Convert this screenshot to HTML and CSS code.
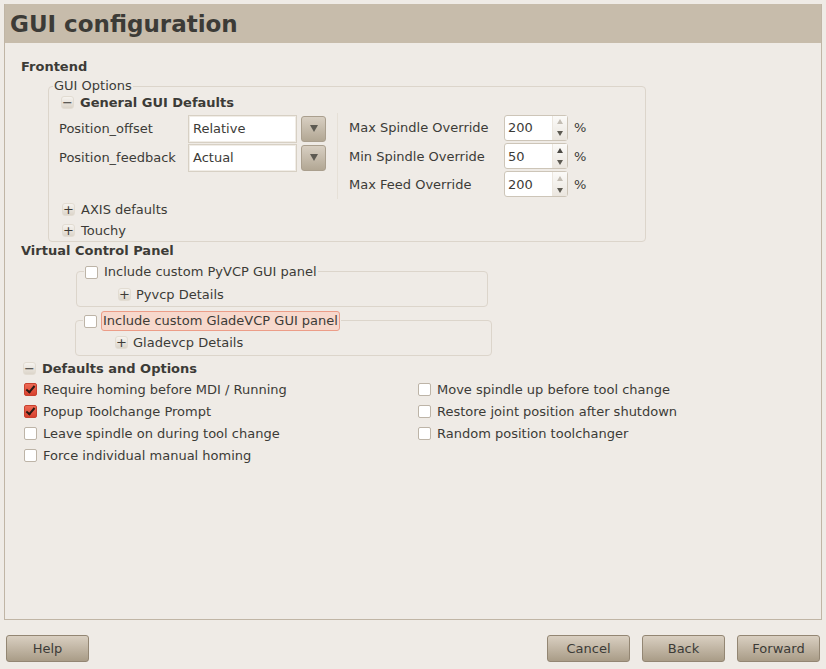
FILE: index.html
```html
<!DOCTYPE html>
<html>
<head>
<meta charset="utf-8">
<link rel="stylesheet" href="styles.css">
</head>
<body>
<div class="window">
  <div class="header">GUI configuration</div>
  <div class="content">
    <div class="section-title">Frontend</div>
    <div class="frame gui-frame">
      <div class="frame-label">GUI Options</div>
      <div class="exp-row first"><span class="exp">−</span><span class="bold">General GUI Defaults</span></div>
      <div class="defaults">
        <div class="left-table">
          <div class="lrow">
            <span class="lbl">Position_offset</span>
            <span class="combo-entry">Relative</span>
            <span class="combo-btn"><span class="tri"></span></span>
          </div>
          <div class="lrow">
            <span class="lbl">Position_feedback</span>
            <span class="combo-entry">Actual</span>
            <span class="combo-btn"><span class="tri"></span></span>
          </div>
        </div>
        <div class="sep"></div>
        <div class="right-table">
          <div class="rrow">
            <span class="rlbl">Max Spindle Override</span>
            <span class="spin"><span class="spin-val">200</span><span class="spin-arrows"><span class="up dim"></span><span class="down"></span></span></span>
            <span class="pct">%</span>
          </div>
          <div class="rrow">
            <span class="rlbl">Min Spindle Override</span>
            <span class="spin"><span class="spin-val">50</span><span class="spin-arrows"><span class="up"></span><span class="down"></span></span></span>
            <span class="pct">%</span>
          </div>
          <div class="rrow">
            <span class="rlbl">Max Feed Override</span>
            <span class="spin"><span class="spin-val">200</span><span class="spin-arrows"><span class="up dim"></span><span class="down"></span></span></span>
            <span class="pct">%</span>
          </div>
        </div>
      </div>
      <div class="exp-row sub"><span class="exp">+</span><span>AXIS defaults</span></div>
      <div class="exp-row sub"><span class="exp">+</span><span>Touchy</span></div>
    </div>
    <div class="section-title vcp">Virtual Control Panel</div>
    <div class="frame pyvcp">
      <div class="frame-label check-label"><span class="cb"></span><span>Include custom PyVCP GUI panel</span></div>
      <div class="exp-row details"><span class="exp">+</span><span>Pyvcp Details</span></div>
    </div>
    <div class="frame glade">
      <div class="frame-label check-label"><span class="cb"></span><span class="hl">Include custom GladeVCP GUI panel</span></div>
      <div class="exp-row details"><span class="exp">+</span><span>Gladevcp Details</span></div>
    </div>
    <div class="exp-row opts-head"><span class="exp">−</span><span class="bold">Defaults and Options</span></div>
    <div class="options">
      <div class="col">
        <div class="opt"><span class="cb on"></span><span>Require homing before MDI / Running</span></div>
        <div class="opt"><span class="cb on"></span><span>Popup Toolchange Prompt</span></div>
        <div class="opt"><span class="cb"></span><span>Leave spindle on during tool change</span></div>
        <div class="opt"><span class="cb"></span><span>Force individual manual homing</span></div>
      </div>
      <div class="col right">
        <div class="opt"><span class="cb"></span><span>Move spindle up before tool change</span></div>
        <div class="opt"><span class="cb"></span><span>Restore joint position after shutdown</span></div>
        <div class="opt"><span class="cb"></span><span>Random position toolchanger</span></div>
      </div>
    </div>
  </div>
</div>
<div class="buttons">
  <button class="btn">Help</button>
  <div class="spacer"></div>
  <button class="btn">Cancel</button>
  <button class="btn">Back</button>
  <button class="btn">Forward</button>
</div>
</body>
</html>
```
FILE: styles.css
```css
html, body {
  margin: 0;
  padding: 0;
  background: #efebe6;
}
body {
  font-family: "DejaVu Sans", sans-serif;
  font-size: 13px;
  color: #3c3b37;
  width: 826px;
  height: 669px;
  overflow: hidden;
}
.window {
  margin: 4px 4px 0 4px;
  height: 615px;
  border: 1px solid #c0b5a5;
  border-top: none;
}
.header {
  height: 39px;
  background: #c7bcab;
  display: flex;
  align-items: center;
  padding-left: 5px;
  font-size: 23px;
  font-weight: bold;
}
.content {
  padding: 14px 0 0 16px;
}
.bold, .section-title {
  font-weight: bold;
}
.section-title {
  height: 20px;
  line-height: 20px;
}
.frame {
  position: relative;
  border: 1px solid #dcd5cb;
  border-radius: 4px;
  box-sizing: border-box;
}
.frame-label {
  position: absolute;
  top: -10px;
  left: 4px;
  line-height: 18px;
  padding: 0 1px;
  background: #efebe6;
}
.gui-frame {
  margin: 9px 0 0 27px;
  width: 598px;
  height: 156px;
  padding: 5px 0 0 12px;
}
.exp-row {
  display: flex;
  align-items: center;
  height: 20px;
}
.exp {
  width: 13px;
  height: 13px;
  box-sizing: border-box;
  border-radius: 3px;
  background: linear-gradient(#f6f3ef, #dcd5ca);
  border: 1px solid #e2dcd2;
  display: flex;
  align-items: center;
  justify-content: center;
  font-size: 13px;
  line-height: 13px;
  margin-right: 6px;
  font-family: "DejaVu Sans", sans-serif;
}
.defaults {
  display: flex;
  margin: 1px 0 0 -2px;
  height: 86px;
}
.left-table {
  display: flex;
  flex-direction: column;
  padding-top: 1px;
}
.lrow {
  display: flex;
  align-items: center;
  height: 29px;
}
.lbl {
  width: 129px;
}
.combo-entry {
  width: 109px;
  height: 28px;
  box-sizing: border-box;
  background: #fff;
  border: 1px solid #d7d0c4;
  box-shadow: inset 0 0 0 1px #f1ede7;
  padding-left: 4px;
  display: flex;
  align-items: center;
}
.combo-btn {
  margin-left: 4px;
  width: 25px;
  height: 26px;
  box-sizing: border-box;
  border: 1px solid #aa9f8e;
  border-radius: 3px;
  background: linear-gradient(#d8cfc2, #b2a794);
  display: flex;
  align-items: center;
  justify-content: center;
}
.tri {
  width: 0;
  height: 0;
  border-left: 4px solid transparent;
  border-right: 4px solid transparent;
  border-top: 7px solid #5d5a52;
}
.sep {
  width: 1px;
  background: #e6e0d7;
  margin: 0 11px 0 11px;
  height: 86px;
}
.right-table {
  display: flex;
  flex-direction: column;
}
.rrow {
  display: flex;
  align-items: center;
  height: 29px;
}
.rrow + .rrow {
  height: 28px;
}
.rlbl {
  width: 155px;
}
.spin {
  width: 64px;
  height: 26px;
  box-sizing: border-box;
  border: 1px solid #cdc5b8;
  border-radius: 3px;
  background: #fff;
  display: flex;
}
.spin-val {
  flex: 1;
  padding-left: 3px;
  display: flex;
  align-items: center;
}
.spin-arrows {
  width: 14px;
  display: flex;
  flex-direction: column;
  background: linear-gradient(#fbfaf8, #ebe6df);
  border-left: 1px solid #ece7df;
}
.up, .down {
  flex: 1;
  display: flex;
  align-items: center;
  justify-content: center;
}
.up::after {
  content: "";
  border-left: 3px solid transparent;
  border-right: 3px solid transparent;
  border-bottom: 5px solid #4d4a44;
}
.up.dim::after {
  border-bottom-color: #c3bdb3;
}
.down::after {
  content: "";
  border-left: 3px solid transparent;
  border-right: 3px solid transparent;
  border-top: 5px solid #5d5a52;
}
.pct {
  margin-left: 6px;
}
.exp-row.sub {
  height: 21px;
  margin-left: 1px;
}
.vcp {
  height: 18px;
  line-height: 18px;
}
.cb {
  width: 13px;
  height: 13px;
  box-sizing: border-box;
  border: 1px solid #bdb4a7;
  border-radius: 2px;
  background: #fff;
  flex: none;
}
.cb.on {
  background: linear-gradient(#ee6a55, #d8422f);
  border-color: #c8412f;
  position: relative;
}
.cb.on::after {
  content: "";
  position: absolute;
  left: 3px;
  top: 0px;
  width: 3px;
  height: 7px;
  border-right: 2px solid #2a1a14;
  border-bottom: 2px solid #2a1a14;
  transform: rotate(40deg);
}
.check-label {
  display: flex;
  align-items: center;
  left: 7px;
  padding: 0 1px;
  line-height: 20px;
}
.check-label .cb {
  margin-right: 6px;
}
.pyvcp {
  margin: 11px 0 0 55px;
  width: 412px;
  height: 36px;
  padding: 12px 0 0 41px;
}
.glade {
  margin: 13px 0 0 54px;
  width: 417px;
  height: 36px;
  padding: 11px 0 0 39px;
}
.glade .check-label .cb {
  margin-right: 4px;
}
.hl {
  background: #f7d8cc;
  border: 1px solid #ec9d88;
  border-radius: 3px;
  padding: 0 1px 0 1px;
  line-height: 18px;
}
.details .exp {
  margin-right: 5px;
}
.opts-head {
  margin: 2px 0 0 2px;
}
.options {
  display: flex;
  margin-left: 3px;
  padding-top: 0;
}
.col {
  width: 394px;
  display: flex;
  flex-direction: column;
}
.opt {
  display: flex;
  align-items: center;
  height: 22px;
}
.opt .cb {
  margin-right: 6px;
}
.buttons {
  display: flex;
  padding: 15px 6px 0 6px;
  gap: 12px;
}
.spacer {
  flex: 1;
}
.btn {
  width: 83px;
  height: 27px;
  font-family: inherit;
  font-size: 13px;
  color: #3c3b37;
  border: 1px solid #938673;
  border-radius: 3px;
  background: linear-gradient(#d9cfc1, #a99c87);
  padding: 0;
}
```
